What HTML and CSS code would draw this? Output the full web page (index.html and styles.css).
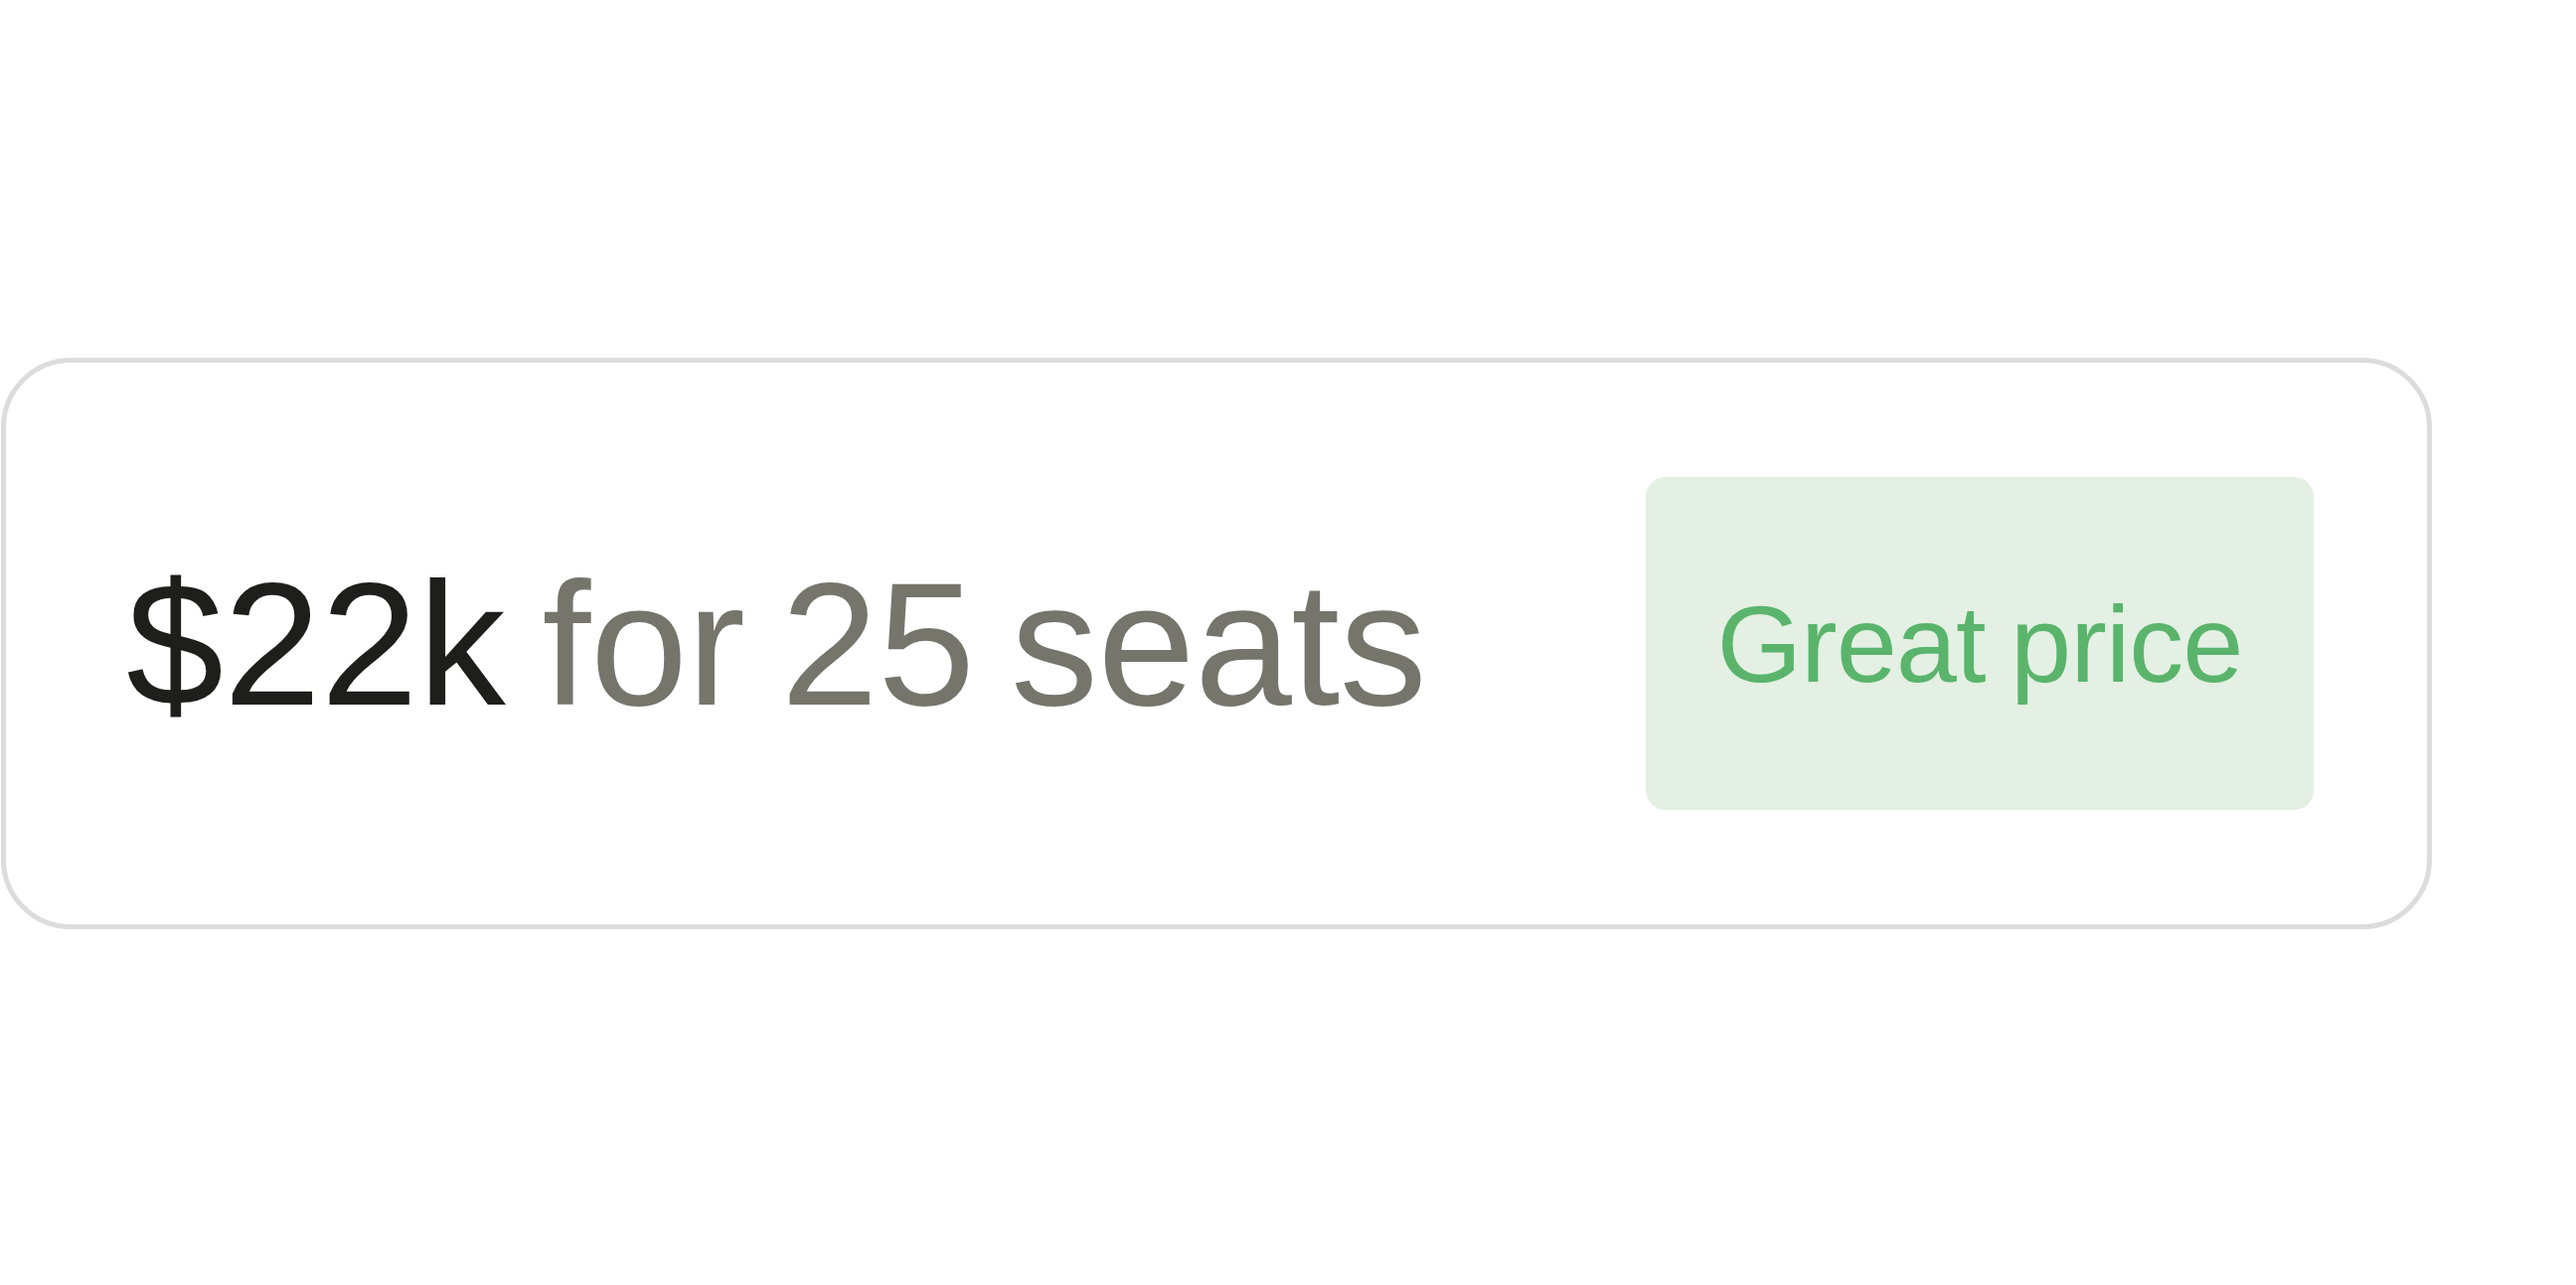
FILE: index.html
```html
<!DOCTYPE html>
<html lang="en">
<head>
<meta charset="utf-8">
<title>Pricing</title>
<link rel="stylesheet" href="styles.css">
</head>
<body>
<div class="page">
  <div class="card">
    <div class="quote">
      <span class="amount">$22k</span> <span class="rest">for 25 seats</span>
    </div>
    <div class="badge">
      <span class="badge-text">Great price</span>
    </div>
  </div>
</div>
</body>
</html>
```

FILE: styles.css
```css
html, body {
  margin: 0;
  padding: 0;
  background: #ffffff;
}

.page {
  width: 2592px;
  height: 1293px;
  padding: 360px 0 0 1px;
  box-sizing: border-box;
}

.card {
  width: 2446px;
  height: 575px;
  box-sizing: border-box;
  border: 5px solid #dcdcdc;
  border-radius: 70px;
  background: #ffffff;
  display: flex;
  align-items: center;
  justify-content: space-between;
  padding: 0 114px 0 121px;
}

.quote {
  font-family: "Liberation Sans", Arial, sans-serif;
  font-size: 176px;
  line-height: 1;
  letter-spacing: 0;
  word-spacing: -12px;
  white-space: nowrap;
  color: #76756c;
}

.amount {
  color: #1e1e1c;
}

.rest {
  color: #76756c;
  letter-spacing: -0.5px;
}

.badge {
  width: 672px;
  height: 335px;
  border-radius: 20px;
  background: #e4f0e3;
  display: flex;
  align-items: center;
  justify-content: center;
}

.badge-text {
  font-family: "Liberation Sans", Arial, sans-serif;
  font-size: 110px;
  line-height: 1;
  letter-spacing: -1px;
  word-spacing: -4px;
  color: #5ab46c;
  white-space: nowrap;
}
```
